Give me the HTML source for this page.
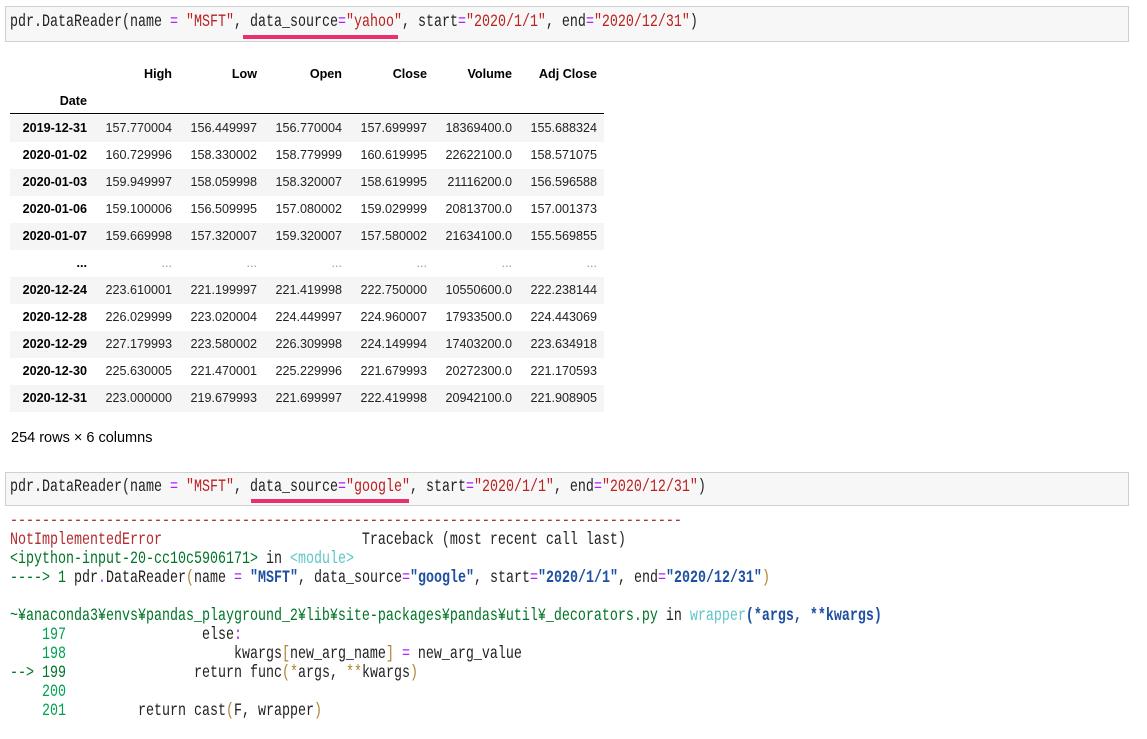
<!DOCTYPE html>
<html><head><meta charset="utf-8"><style>
body{margin:0;width:1147px;height:739px;background:#fff;position:relative;overflow:hidden;font-family:"Liberation Sans",sans-serif;color:#000}
.box{position:absolute;left:5px;width:1124px;background:#f7f7f7;border:1px solid #cfcfcf;box-sizing:border-box}
.c{position:absolute;left:10px;font-family:"Liberation Mono",monospace;font-size:13.33px;white-space:pre;transform:scaleY(1.3);transform-origin:left top;color:#222;line-height:16px}
.s{color:#ba2121}.o{color:#aa22ff}
.ul{position:absolute;height:4px;background:#e8306a}
.row{position:absolute;left:10px;width:594px;height:27px}
.row.g{background:#f5f5f5}
.row span{position:absolute;top:6px;font-size:12.6px;text-align:right;white-space:nowrap;color:#222}
.row span.i{font-weight:bold;color:#000}
.r{color:#b22b31}.gr{color:#007427}.ln{color:#00a250}.bl{color:#1f4fa0;font-weight:bold}.br{color:#af8330}.cy{color:#60c6c8}
</style></head><body>
<div class="box" style="top:6px;height:36px"></div>
<div class="c" style="top:13px">pdr.DataReader(name <span class="o">=</span> <span class="s">"MSFT"</span>, data_source<span class="o">=</span><span class="s">"yahoo"</span>, start<span class="o">=</span><span class="s">"2020/1/1"</span>, end<span class="o">=</span><span class="s">"2020/12/31"</span>)</div>
<div class="ul" style="left:243px;top:35px;width:155px"></div>

<div id="tbl"></div>
<div style="position:absolute;left:10px;top:113px;width:594px;height:1px;background:#000"></div>
<div style="position:absolute;left:11px;top:430px;font-size:14.5px;color:#000">254 rows × 6 columns</div>

<div class="box" style="top:472px;height:34px"></div>
<div class="c" style="top:478px">pdr.DataReader(name <span class="o">=</span> <span class="s">"MSFT"</span>, data_source<span class="o">=</span><span class="s">"google"</span>, start<span class="o">=</span><span class="s">"2020/1/1"</span>, end<span class="o">=</span><span class="s">"2020/12/31"</span>)</div>
<div class="ul" style="left:251px;top:499px;width:158px"></div>

<div class="c r" style="top:512px">------------------------------------------------------------------------------------</div>
<div class="c" style="top:531px"><span class="r">NotImplementedError</span>                         Traceback (most recent call last)</div>
<div class="c" style="top:550px"><span class="gr">&lt;ipython-input-20-cc10c5906171&gt;</span> in <span class="cy">&lt;module&gt;</span></div>
<div class="c" style="top:569px"><span class="gr">----&gt; 1</span> pdr<span class="o">.</span>DataReader<span class="br">(</span>name <span class="o">=</span> <span class="bl">"MSFT"</span>, data_source<span class="o">=</span><span class="bl">"google"</span>, start<span class="o">=</span><span class="bl">"2020/1/1"</span>, end<span class="o">=</span><span class="bl">"2020/12/31"</span><span class="br">)</span></div>
<div class="c" style="top:607px"><span class="gr">~¥anaconda3¥envs¥pandas_playground_2¥lib¥site-packages¥pandas¥util¥_decorators.py</span> in <span class="cy">wrapper</span><span class="bl">(*args, **kwargs)</span></div>
<div class="c" style="top:626px"><span class="ln">    197</span>                 else<span class="o">:</span></div>
<div class="c" style="top:645px"><span class="ln">    198</span>                     kwargs<span class="br">[</span>new_arg_name<span class="br">]</span> <span class="o">=</span> new_arg_value</div>
<div class="c" style="top:664px"><span class="gr">--&gt; 199</span>                return func<span class="br">(*</span>args, <span class="br">**</span>kwargs<span class="br">)</span></div>
<div class="c" style="top:683px"><span class="ln">    200</span></div>
<div class="c" style="top:702px"><span class="ln">    201</span>         return cast<span class="br">(</span>F, wrapper<span class="br">)</span></div>

<script>
var rights=[87,172,257,342,427,512,597];
var rows=[
["2019-12-31","157.770004","156.449997","156.770004","157.699997","18369400.0","155.688324"],
["2020-01-02","160.729996","158.330002","158.779999","160.619995","22622100.0","158.571075"],
["2020-01-03","159.949997","158.059998","158.320007","158.619995","21116200.0","156.596588"],
["2020-01-06","159.100006","156.509995","157.080002","159.029999","20813700.0","157.001373"],
["2020-01-07","159.669998","157.320007","159.320007","157.580002","21634100.0","155.569855"],
["...","...","...","...","...","...","..."],
["2020-12-24","223.610001","221.199997","221.419998","222.750000","10550600.0","222.238144"],
["2020-12-28","226.029999","223.020004","224.449997","224.960007","17933500.0","224.443069"],
["2020-12-29","227.179993","223.580002","226.309998","224.149994","17403200.0","223.634918"],
["2020-12-30","225.630005","221.470001","225.229996","221.679993","20272300.0","221.170593"],
["2020-12-31","223.000000","219.679993","221.699997","222.419998","20942100.0","221.908905"]];
var h='';
function cell(t,r,cls,sty){return '<span class="'+cls+'" style="right:'+(604-r)+'px;'+(sty||'')+'">'+t+'</span>';}
h+='<div class="row" style="top:61px">';
["","High","Low","Open","Close","Volume","Adj Close"].forEach(function(t,i){h+=cell(t,rights[i],'i');});
h+='</div><div class="row" style="top:88px">'+cell('Date',rights[0],'i')+'</div>';
rows.forEach(function(r,k){
 var dots=r[0]=='...';
 h+='<div class="row'+(k%2==0?' g':'')+'" style="top:'+(115+k*27)+'px">';
 r.forEach(function(t,i){h+=cell(t,rights[i],i==0?'i':'',dots&&i>0?'color:#999;':'');});
 h+='</div>';
});
document.getElementById('tbl').innerHTML=h;
</script>
</body></html>
